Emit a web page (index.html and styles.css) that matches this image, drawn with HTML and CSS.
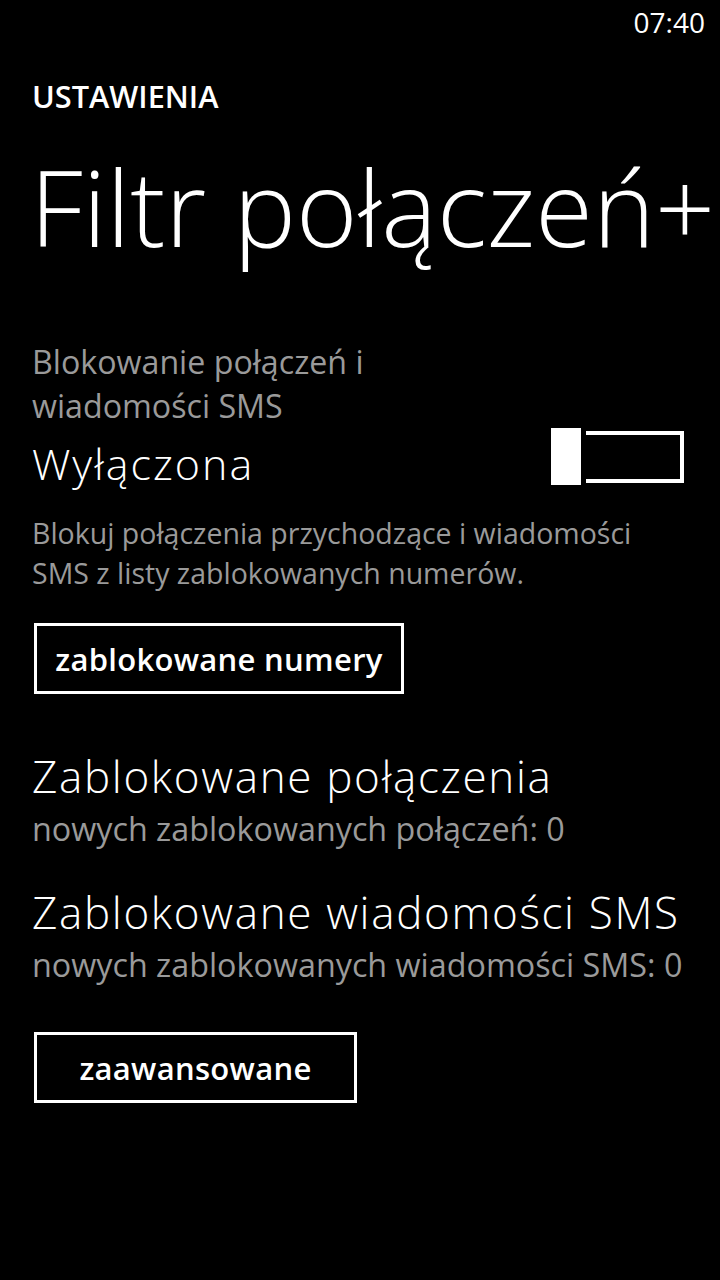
FILE: index.html
```html
<!DOCTYPE html>
<html lang="pl">
<head>
<meta charset="utf-8">
<title>Filtr połączeń+</title>
<link rel="stylesheet" href="styles.css">
</head>
<body>
<div class="screen">
  <div class="status">07:40</div>
  <div class="app">
    <div class="app-title">USTAWIENIA</div>
    <h1 class="page-title">Filtr połączeń+</h1>

    <div class="setting">
      <div class="setting-label">Blokowanie połączeń i<br>wiadomości SMS</div>
      <div class="setting-row">
        <div class="setting-value">Wyłączona</div>
        <div class="toggle">
          <div class="toggle-thumb"></div>
          <div class="toggle-track"></div>
        </div>
      </div>
      <p class="setting-desc">Blokuj połączenia przychodzące i wiadomości<br>SMS z listy zablokowanych numerów.</p>
      <button class="btn btn-numbers">zablokowane numery</button>
    </div>

    <div class="item item-first">
      <div class="item-title">Zablokowane połączenia</div>
      <div class="item-sub">nowych zablokowanych połączeń: 0</div>
    </div>
    <div class="item">
      <div class="item-title">Zablokowane wiadomości SMS</div>
      <div class="item-sub">nowych zablokowanych wiadomości SMS: 0</div>
    </div>

    <button class="btn btn-advanced">zaawansowane</button>
  </div>
</div>
</body>
</html>
```

FILE: styles.css
```css
html, body {
  margin: 0;
  padding: 0;
  background: #000;
}
body {
  color: #fff;
  font-family: "Open Sans", "Noto Sans", sans-serif;
}
.screen {
  width: 720px;
  height: 1280px;
  overflow: hidden;
}
.status {
  padding: 2px 15px 0 0;
  height: 40px;
  line-height: 40px;
  font-size: 28px;
  text-align: right;
}
.app {
  padding-left: 32px;
  padding-right: 36px;
}
.app-title {
  margin-top: 34px;
  font-size: 30.7px;
  font-weight: 600;
  line-height: 40px;
}
.page-title {
  margin: 31px 0 0 -2px;
  font-size: 105px;
  font-weight: 300;
  line-height: 120px;
  white-space: nowrap;
}
.setting-label {
  margin-top: 73px;
  font-size: 32.2px;
  line-height: 44px;
  color: #9a9a9a;
}
.setting-row {
  display: flex;
  align-items: flex-start;
}
.setting-value {
  margin-top: 8px;
  font-size: 43px;
  font-weight: 300;
  letter-spacing: 2px;
  line-height: 56px;
}
.toggle {
  margin-left: auto;
  display: flex;
  align-items: center;
  gap: 5px;
  height: 57px;
}
.toggle-thumb {
  width: 30px;
  height: 57px;
  background: #fff;
}
.toggle-track {
  width: 94px;
  height: 44px;
  border: 4px solid #fff;
  border-left: 0;
}
.setting-desc {
  margin: 21px 0 0 0;
  font-size: 28.5px;
  line-height: 40px;
  color: #9a9a9a;
  white-space: nowrap;
}
.btn {
  display: block;
  box-sizing: border-box;
  height: 71px;
  margin: 0 0 0 2px;
  padding: 0;
  border: 3px solid #fff;
  background: transparent;
  color: #fff;
  font-family: "Open Sans", "Noto Sans", sans-serif;
  font-size: 31px;
  font-weight: 600;
  letter-spacing: 0.3px;
  line-height: 64px;
  text-align: center;
}
.btn-numbers {
  width: 370px;
  margin-top: 30px;
}
.btn-advanced {
  width: 323px;
  margin-top: 46px;
}
.item-first {
  margin-top: 54px;
}
.item + .item {
  margin-top: 34px;
}
.item-title {
  font-size: 44px;
  font-weight: 300;
  letter-spacing: 1.65px;
  line-height: 56px;
  white-space: nowrap;
}
.item-sub {
  margin-top: 2px;
  font-size: 32.3px;
  line-height: 44px;
  color: #9a9a9a;
  white-space: nowrap;
}
```
